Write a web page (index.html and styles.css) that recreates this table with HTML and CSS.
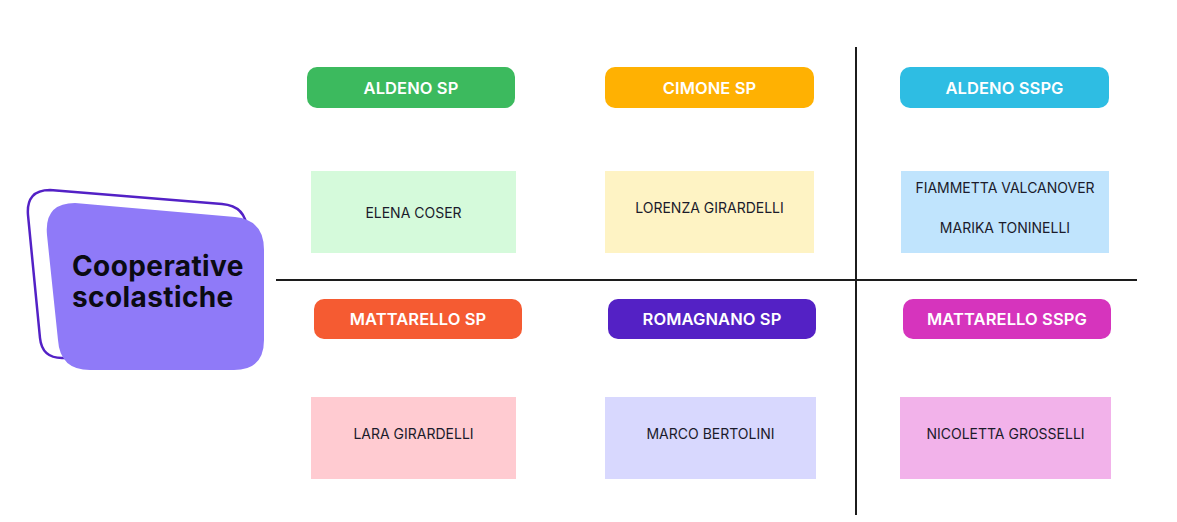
FILE: index.html
```html
<!DOCTYPE html>
<html lang="it">
<head>
<meta charset="utf-8">
<title>Cooperative scolastiche</title>
<link rel="stylesheet" href="styles.css">
</head>
<body>
<main class="page">
  <aside class="side">
    <div class="badge">
      <svg class="badge-bg" viewBox="20 185 250 190" width="250" height="190" aria-hidden="true">
        <path d="M50 190 L222 204 Q246 206 247 230 L247 340 Q247 358 227 358 L62 358 Q42 358 40 338 L28 215 Q26 190 50 190 Z" fill="none" stroke="#5321c6" stroke-width="2.5"/>
        <path d="M75 203 L235 217 Q264 220 264 250 L264 340 Q264 370 234 370 L90 370 Q60 370 58 340 L47 235 Q44 203 75 203 Z" fill="#8f7af8"/>
      </svg>
      <h1 class="badge-title">Cooperative<br>scolastiche</h1>
    </div>
  </aside>

  <section class="board">
    <div class="cell col-a">
      <div class="pill green">ALDENO SP</div>
      <div class="card mint centered"><p>ELENA COSER</p></div>
    </div>
    <div class="cell col-b">
      <div class="pill orange">CIMONE SP</div>
      <div class="card cream"><p>LORENZA GIRARDELLI</p></div>
    </div>
    <div class="cell col-c">
      <div class="pill cyan">ALDENO SSPG</div>
      <div class="card sky two"><p>FIAMMETTA VALCANOVER</p><p>MARIKA TONINELLI</p></div>
    </div>

    <div class="cell col-a lower">
      <div class="pill red">MATTARELLO SP</div>
      <div class="card rose"><p>LARA GIRARDELLI</p></div>
    </div>
    <div class="cell col-b lower">
      <div class="pill violet">ROMAGNANO SP</div>
      <div class="card lavender"><p>MARCO BERTOLINI</p></div>
    </div>
    <div class="cell col-c lower">
      <div class="pill magenta">MATTARELLO SSPG</div>
      <div class="card orchid"><p>NICOLETTA GROSSELLI</p></div>
    </div>
  </section>
</main>
</body>
</html>
```

FILE: styles.css
```css
* { box-sizing: border-box; }

html, body {
  margin: 0;
  padding: 0;
  background: #ffffff;
}

body {
  font-family: "Inter", "DejaVu Sans", sans-serif;
  color: #1b1b2b;
  width: 1177px;
  height: 522px;
  overflow: hidden;
}

.page {
  display: flex;
  padding-top: 47px;
}

/* left badge */
.side {
  width: 276px;
  flex: none;
  padding-top: 138px;
  padding-left: 20px;
}

.badge {
  position: relative;
  width: 250px;
  height: 190px;
}

.badge-bg {
  position: absolute;
  left: 0;
  top: 0;
  display: block;
}

.badge-title {
  position: relative;
  margin: 0;
  padding: 66px 0 0 52px;
  font-size: 28px;
  line-height: 31px;
  font-weight: 700;
  color: #0b0b12;
  letter-spacing: 0.4px;
}

/* board */
.board {
  display: grid;
  grid-template-columns: 284px 295px 282px;
  grid-template-rows: 232px 236px;
}

.cell {
  display: flex;
  flex-direction: column;
  align-items: flex-start;
  padding-top: 20px;
}

.cell.col-c {
  border-left: 2px solid #1c1c1c;
}

.cell.lower {
  border-top: 2px solid #1c1c1c;
  padding-top: 18px;
}

.pill {
  width: 208px;
  height: 41px;
  border-radius: 10px;
  display: flex;
  align-items: center;
  justify-content: center;
  color: #ffffff;
  font-size: 16.5px;
  font-weight: 600;
  letter-spacing: 0.1px;
}

.lower .pill { height: 40px; }

.card {
  height: 82px;
  width: 205px;
  margin-top: 63px;
  display: flex;
  flex-direction: column;
  align-items: center;
  justify-content: center;
  padding-bottom: 10px;
  font-size: 14px;
  line-height: 17px;
}

.lower .card { margin-top: 58px; }

.card p { margin: 0; }

.card.centered { padding-bottom: 0; }

.card.two { gap: 23px; }

/* column placement */
.col-a .pill { margin-left: 31px; }
.col-a .card { margin-left: 35px; }
.col-a.lower .pill { margin-left: 38px; }

.col-b .pill { margin-left: 45px; width: 209px; }
.col-b .card { margin-left: 45px; width: 209px; }
.col-b.lower .pill { margin-left: 48px; width: 208px; }
.col-b.lower .card { width: 211px; }

.col-c .pill { margin-left: 43px; width: 209px; }
.col-c .card { margin-left: 44px; width: 208px; }
.col-c.lower .pill { margin-left: 46px; width: 208px; }
.col-c.lower .card { margin-left: 43px; width: 211px; }

/* colours */
.green { background: #3cba5e; }
.orange { background: #ffb102; }
.cyan { background: #2ebde3; }
.red { background: #f55b32; }
.violet { background: #5421c5; }
.magenta { background: #d634bd; }

.mint { background: #d5fadb; }
.cream { background: #fef3c4; }
.sky { background: #c0e4fd; }
.rose { background: #ffcbd1; }
.lavender { background: #d8d8fe; }
.orchid { background: #f2b2ea; }
```
